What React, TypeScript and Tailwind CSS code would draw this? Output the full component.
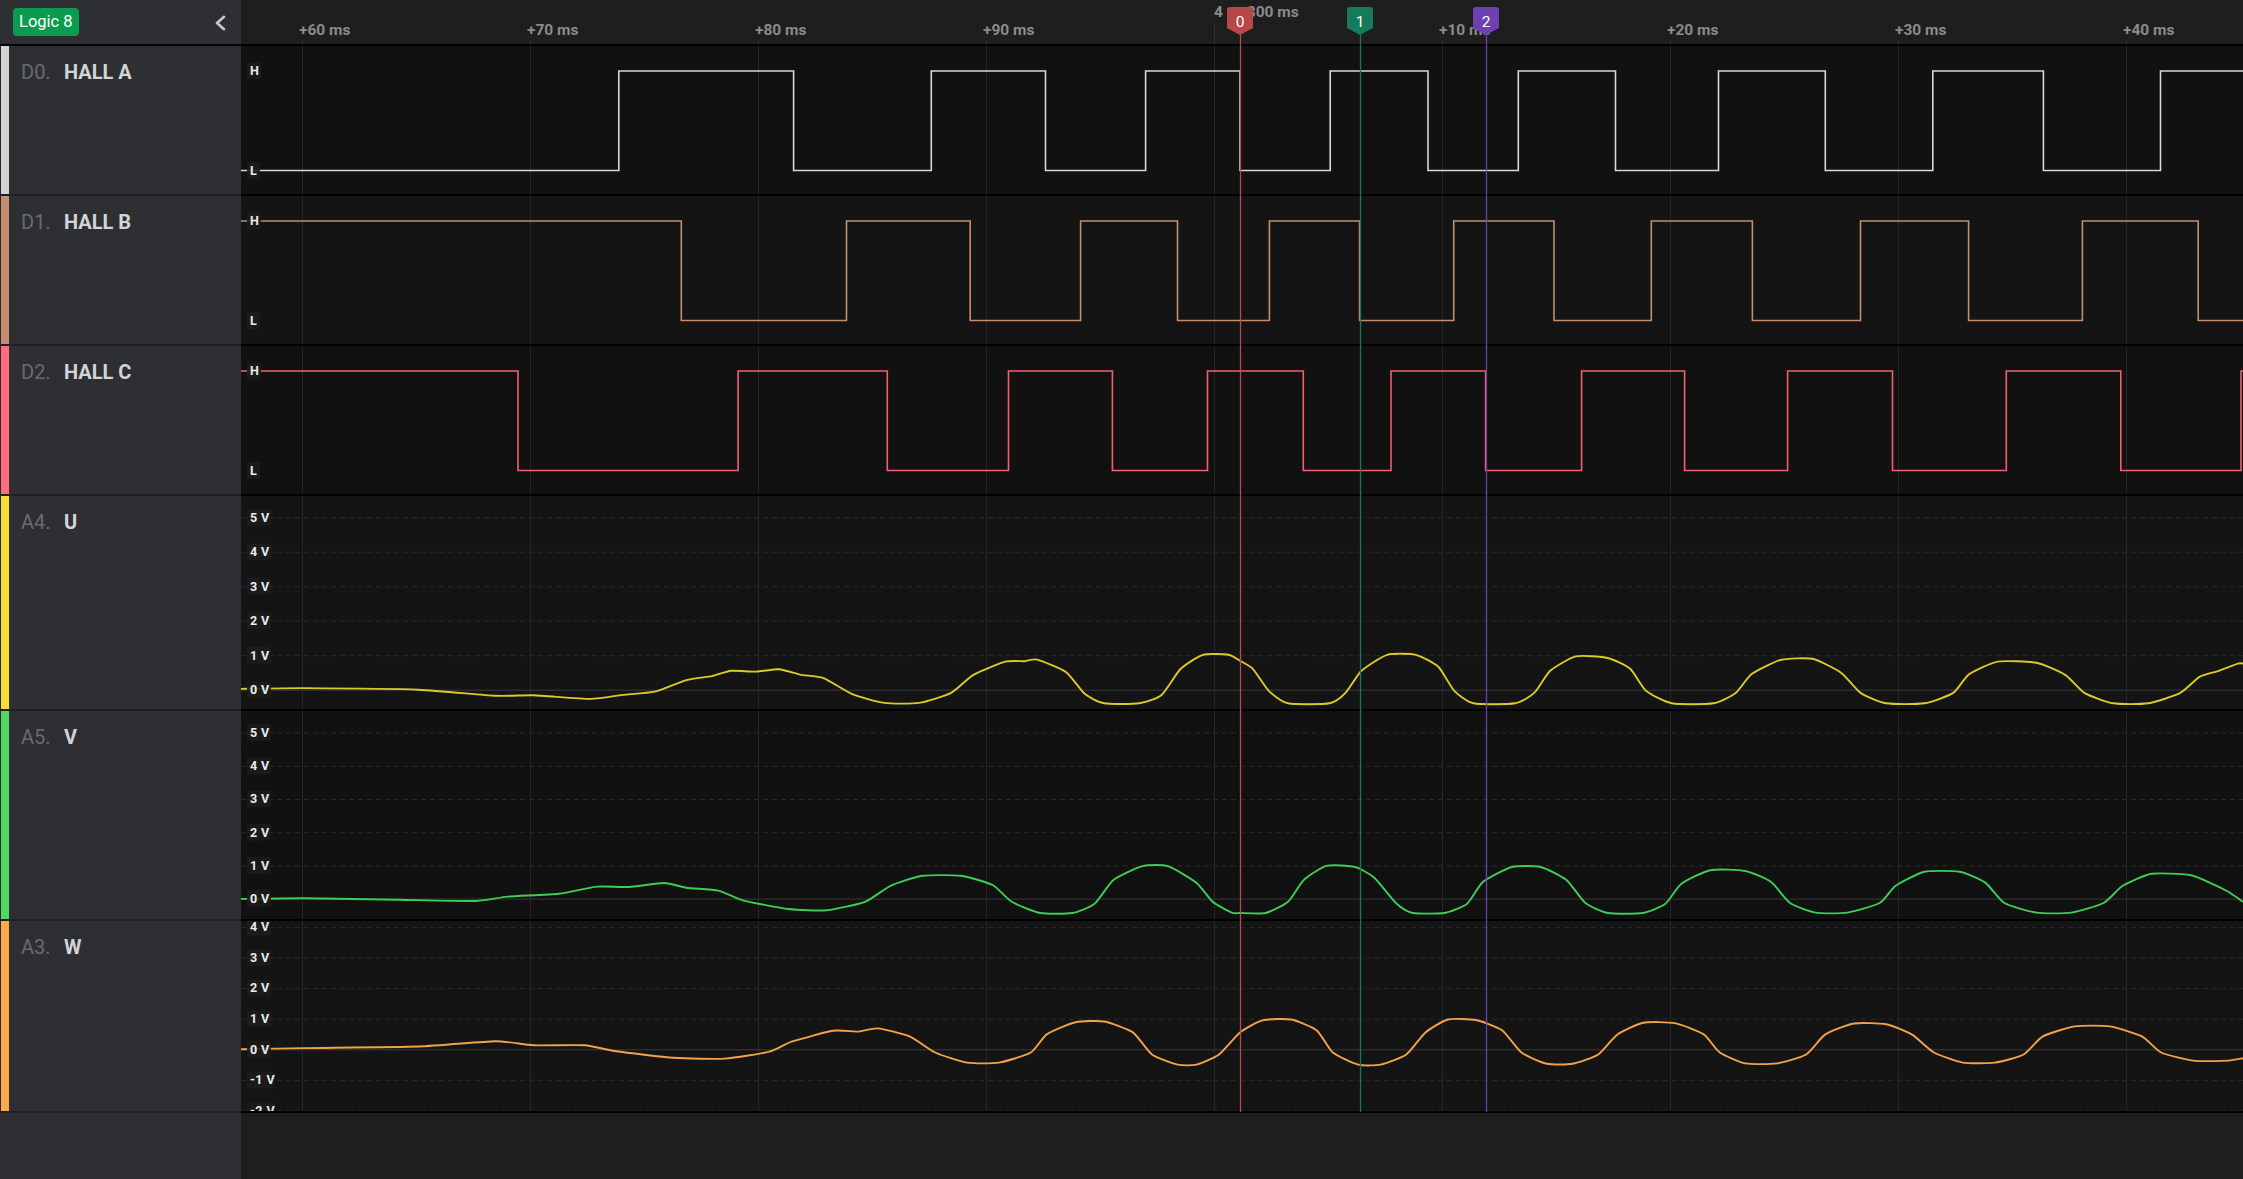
import React from "react";

const W = 2002;
const OX = 241;
const gridXs = Array.from({ length: 9 }, (_, k) => 61 + 228 * k);

type Dig = {
  id: string;
  name: string;
  strip: string;
  color: string;
  startHigh: boolean;
  toggles: number[];
  bg: string;
};

const digital: Dig[] = [
  {
    id: "D0.",
    name: "HALL A",
    strip: "bg-[#d4d4d4]",
    color: "#d8d8d8",
    startHigh: false,
    toggles: [618.8, 793.6, 931.3, 1045.5, 1145.6, 1240, 1330.2, 1428, 1518.3, 1615.5, 1718.5, 1825.3, 1932.8, 2043.4, 2160.5],
    bg: "bg-[#111111]",
  },
  {
    id: "D1.",
    name: "HALL B",
    strip: "bg-[#c48f6e]",
    color: "#c48d6b",
    startHigh: true,
    toggles: [681.3, 846.5, 970.2, 1080.6, 1177.5, 1269.4, 1359.6, 1453.7, 1554, 1651.3, 1752.4, 1860.5, 1968.6, 2082.4, 2198.2],
    bg: "bg-[#141414]",
  },
  {
    id: "D2.",
    name: "HALL C",
    strip: "bg-[#ff6d7a]",
    color: "#f2606f",
    startHigh: true,
    toggles: [518, 738.1, 887.3, 1008.5, 1112.4, 1207.5, 1303.3, 1391, 1485.6, 1581.6, 1684.6, 1787.6, 1892.5, 2006.3, 2120.8, 2241],
    bg: "bg-[#111111]",
  },
];

const U11 = [[0,495],[100,493],[280,497],[400,512],[460,511],[550,520],[600,510],[650,502],[700,473],[740,463],[770,450],[810,452],[845,446],[880,460],[915,468],[960,508],[1010,530],[1065,530],[1115,505],[1150,460],[1200,427],[1230,426],[1250,422],[1295,453],[1325,508],[1355,531],[1410,531],[1445,510],[1475,445],[1510,410],[1550,410]];
const U12 = [[0,425],[20,445],[45,500],[75,531],[140,531],[165,505],[190,450],[230,410],[275,410],[310,440],[335,500],[365,531],[430,531],[460,505],[485,450],[525,414],[575,418],[610,445],[635,500],[675,531],[740,531],[775,505],[800,458],[845,423],[895,420],[940,455],[970,505],[1010,531],[1070,531],[1115,505],[1140,458],[1185,427],[1245,430],[1290,460],[1320,505],[1365,531],[1420,531],[1470,505],[1500,465],[1530,450],[1560,432],[1568,432]];
const V11 = [[0,1018],[100,1016],[250,1020],[370,1023],[420,1012],[500,1005],[560,987],[610,988],[665,978],[700,990],[750,997],[790,1022],[860,1043],[920,1046],[980,1025],[1020,985],[1070,960],[1130,960],[1180,983],[1210,1025],[1255,1053],[1305,1053],[1340,1030],[1370,970],[1415,936],[1455,936],[1500,978],[1525,1025],[1555,1052]];
const V12 = [[0,1053],[40,1053],[75,1025],[100,970],[135,935],[180,938],[210,965],[245,1030],[270,1053],[320,1053],[355,1030],[380,975],[425,938],[470,938],[510,970],[540,1028],[575,1053],[630,1053],[665,1030],[690,980],[735,946],[790,948],[830,975],[860,1028],[900,1052],[950,1052],[1000,1028],[1025,985],[1070,950],[1125,950],[1165,977],[1195,1028],[1245,1052],[1300,1052],[1350,1028],[1380,985],[1425,955],[1485,958],[1520,980],[1545,1000],[1568,1025]];
const W11 = [[0,1392],[100,1389],[280,1385],[400,1372],[460,1382],[540,1382],[590,1397],[680,1413],[760,1415],[830,1398],[865,1373],[930,1346],[970,1348],[1000,1340],[1050,1360],[1090,1400],[1140,1425],[1190,1425],[1240,1400],[1265,1355],[1310,1325],[1355,1323],[1400,1350],[1430,1405],[1470,1430],[1500,1430],[1535,1405]];
const W12 = [[0,1350],[35,1320],[80,1318],[120,1345],[145,1400],[185,1430],[220,1430],[260,1405],[290,1350],[325,1318],[370,1320],[410,1345],[440,1400],[480,1428],[520,1428],[560,1405],[590,1355],[630,1326],[680,1327],[725,1355],[750,1400],[790,1427],[840,1427],[885,1405],[915,1355],[960,1328],[1010,1330],[1050,1355],[1085,1400],[1130,1425],[1180,1425],[1225,1405],[1255,1360],[1305,1335],[1360,1335],[1410,1360],[1440,1400],[1490,1420],[1545,1420],[1568,1414]];

function toVolts(a: number[][], b: number[][], zero: number, perV: number): [number, number][] {
  const out: [number, number][] = [];
  for (const [xi, yi] of a) out.push([240 + xi / 1.568 - OX, (zero - yi) / perV]);
  for (const [xi, yi] of b) out.push([1240 + xi / 1.5633 - OX, (zero - yi) / perV]);
  return out;
}

function smooth(pts: [number, number][]) {
  const k = 10;
  let d = `M${pts[0][0].toFixed(1)},${pts[0][1].toFixed(1)}`;
  for (let i = 0; i < pts.length - 1; i++) {
    const p0 = pts[i - 1] || pts[i];
    const p1 = pts[i];
    const p2 = pts[i + 1];
    const p3 = pts[i + 2] || p2;
    const c1x = p1[0] + (p2[0] - p0[0]) / k;
    const c1y = p1[1] + (p2[1] - p0[1]) / k;
    const c2x = p2[0] - (p3[0] - p1[0]) / k;
    const c2y = p2[1] - (p3[1] - p1[1]) / k;
    d += ` C${c1x.toFixed(1)},${c1y.toFixed(1)} ${c2x.toFixed(1)},${c2y.toFixed(1)} ${p2[0].toFixed(1)},${p2[1].toFixed(1)}`;
  }
  return d;
}

type Ana = {
  id: string;
  name: string;
  strip: string;
  color: string;
  bg: string;
  h: number;
  zero: number;
  perV: number;
  levels: number[];
  volts: [number, number][];
  rowClass: string;
};

const analog: Ana[] = [
  {
    id: "A4.",
    name: "U",
    strip: "bg-[#f6df38]",
    color: "#dcc92c",
    bg: "bg-[#141414]",
    h: 213,
    zero: 193.7,
    perV: 34.5,
    levels: [5, 4, 3, 2, 1, 0],
    volts: toVolts(U11, U12, 497, 86),
    rowClass: "h-[215px]",
  },
  {
    id: "A5.",
    name: "V",
    strip: "bg-[#52d964]",
    color: "#3fcc57",
    bg: "bg-[#111111]",
    h: 208,
    zero: 187.6,
    perV: 33.2,
    levels: [5, 4, 3, 2, 1, 0],
    volts: toVolts(V11, V12, 1017, 83),
    rowClass: "h-[210px]",
  },
  {
    id: "A3.",
    name: "W",
    strip: "bg-[#fba94b]",
    color: "#f2a24a",
    bg: "bg-[#141414]",
    h: 190,
    zero: 128.3,
    perV: 30.6,
    levels: [4, 3, 2, 1, 0, -1, -2],
    volts: toVolts(W11, W12, 1392, 76),
    rowClass: "h-[192px]",
  },
];

function digitalPath(startHigh: boolean, toggles: number[], hy: number, ly: number) {
  let high = startHigh;
  let d = `M0,${high ? hy : ly}`;
  for (const t of toggles) {
    const x = (t - OX).toFixed(1);
    d += ` H${x} V${high ? ly : hy}`;
    high = !high;
  }
  d += ` H${W}`;
  return d;
}

function Label({ id, name, strip }: { id: string; name: string; strip: string }) {
  return (
    <div className="w-[241px] shrink-0 flex bg-[#2e2f33] border-b-2 border-[#1f2023]">
      <div className="w-[1px] bg-[#27282b]" />
      <div className={"w-[8px] " + strip} />
      <div className="flex pl-[12px] pt-[15px] text-[20px] leading-[23px]">
        <span className="w-[43px] text-[#6a6b6f]">{id}</span>
        <span className="font-bold text-[#d3d4d6]">{name}</span>
      </div>
    </div>
  );
}

function GridV({ h }: { h: number }) {
  return (
    <g>
      {gridXs.map((x) => (
        <line key={x} x1={x + 0.5} x2={x + 0.5} y1={0} y2={h} stroke="#262626" strokeWidth={1} />
      ))}
    </g>
  );
}

function TagLabel({ x, y, text, w }: { x: number; y: number; text: string; w: number }) {
  return (
    <g>
      <rect x={x - 3} y={y - 8.5} width={w} height={17} rx={2} fill="#1c1c1c" opacity={0.9} />
      <text x={x} y={y + 4.3} fontSize={12.5} fontWeight={700} fill="#ececec" letterSpacing={0.4}>
        {text}
      </text>
    </g>
  );
}

function DigitalRow({ d }: { d: Dig }) {
  const h = 148;
  return (
    <div className="flex h-[150px] shrink-0">
      <Label id={d.id} name={d.name} strip={d.strip} />
      <div className={"flex-1 border-b-2 border-black " + d.bg}>
        <svg width={W} height={h} className="block">
          <GridV h={h} />
          <path d={digitalPath(d.startHigh, d.toggles, 25, 124.5)} fill="none" stroke={d.color} strokeWidth={1.6} />
          <TagLabel x={9} y={25} text="H" w={14} />
          <TagLabel x={9} y={124.5} text="L" w={13} />
        </svg>
      </div>
    </div>
  );
}

function AnalogRow({ a }: { a: Ana }) {
  const pts: [number, number][] = a.volts.map(([x, v]) => [x, a.zero - v * a.perV]);
  return (
    <div className={"flex shrink-0 " + a.rowClass}>
      <Label id={a.id} name={a.name} strip={a.strip} />
      <div className={"flex-1 border-b-2 border-black " + a.bg}>
        <svg width={W} height={a.h} className="block">
          <GridV h={a.h} />
          {a.levels.map((lv) => {
            const y = a.zero - lv * a.perV;
            return lv === 0 ? (
              <line key={lv} x1={0} x2={W} y1={y + 0.5} y2={y + 0.5} stroke="#3a3a3a" strokeWidth={1} />
            ) : (
              <line key={lv} x1={0} x2={W} y1={y + 0.5} y2={y + 0.5} stroke="#2a2a2a" strokeWidth={1} strokeDasharray="5 4" />
            );
          })}
          <path d={smooth(pts)} fill="none" stroke={a.color} strokeWidth={1.9} strokeLinejoin="round" />
          {a.levels.map((lv) => {
            const y = a.zero - lv * a.perV;
            const t = `${lv} V`;
            return <TagLabel key={lv} x={9} y={y} text={t} w={lv < 0 ? 28 : 24} />;
          })}
        </svg>
      </div>
    </div>
  );
}

const timeLabels = [
  { x: 61, t: "+60 ms" },
  { x: 289, t: "+70 ms" },
  { x: 517, t: "+80 ms" },
  { x: 745, t: "+90 ms" },
  { x: 1201, t: "+10 ms" },
  { x: 1429, t: "+20 ms" },
  { x: 1657, t: "+30 ms" },
  { x: 1885, t: "+40 ms" },
];

const markers = [
  { x: 1240 - OX, fill: "#b84747", line: "#b94a4c", n: "0" },
  { x: 1360 - OX, fill: "#157b5a", line: "#17795a", n: "1" },
  { x: 1486 - OX, fill: "#6d41b4", line: "#6a3fae", n: "2" },
];

export default function App() {
  return (
    <div className="relative w-[2243px] h-[1179px] flex flex-col bg-[#1e1e1e] overflow-hidden font-[Roboto,sans-serif]">
      <div className="flex h-[46px] shrink-0">
        <div className="w-[241px] shrink-0 flex items-center justify-between pl-[13px] pr-[14px] bg-[#2e2f33] border-b-2 border-black">
          <div className="h-[28px] px-[6px] flex items-center rounded-[4px] bg-[#0a9c4e] text-white text-[16.5px] leading-none">
            Logic 8
          </div>
          <svg width="13" height="16" viewBox="0 0 13 16" className="mt-[2px]">
            <polyline points="10,1.8 3,8 10,14.2" fill="none" stroke="#c8c9cc" strokeWidth={2.6} strokeLinecap="round" strokeLinejoin="round" />
          </svg>
        </div>
        <div className="relative flex-1 bg-[#1e1e1e] border-b-2 border-black">
          <svg width={W} height={44} className="absolute left-0 top-0">
            {gridXs.map((x) => (
              <line key={x} x1={x + 0.5} x2={x + 0.5} y1={x === 973 ? 22 : 40} y2={44} stroke="#2f2f2f" strokeWidth={1} />
            ))}
          </svg>
          {timeLabels.map((l) => (
            <span
              key={l.t}
              className="absolute top-[21px] text-[15.5px] leading-[19px] font-bold text-[#8a8b8e] whitespace-nowrap"
              style={{ left: l.x - 3 }}
            >
              {l.t}
            </span>
          ))}
          <span className="absolute left-[973px] top-[3px] text-[15.5px] leading-[19px] font-bold text-[#8a8b8e] whitespace-nowrap">
            4 s : 800 ms
          </span>
        </div>
      </div>

      {digital.map((d) => (
        <DigitalRow key={d.id} d={d} />
      ))}
      {analog.map((a) => (
        <AnalogRow key={a.id} a={a} />
      ))}

      <div className="flex flex-1">
        <div className="w-[241px] shrink-0 bg-[#2e2f33]" />
        <div className="flex-1 bg-[#1e1e1e]" />
      </div>

      <svg width={W} height={1113} className="absolute left-[241px] top-0 pointer-events-none">
        {markers.map((m) => (
          <g key={m.n}>
            <line x1={m.x + 0.5} x2={m.x + 0.5} y1={34} y2={1112} stroke={m.line} strokeWidth={1.3} />
            <path
              d={`M${m.x - 13},10 Q${m.x - 13},7 ${m.x - 10},7 H${m.x + 10} Q${m.x + 13},7 ${m.x + 13},10 V28 L${m.x},35 L${m.x - 13},28 Z`}
              fill={m.fill}
            />
            <text x={m.x} y={26.5} textAnchor="middle" fontSize={15.5} fill="#ffffff">
              {m.n}
            </text>
          </g>
        ))}
      </svg>
    </div>
  );
}
